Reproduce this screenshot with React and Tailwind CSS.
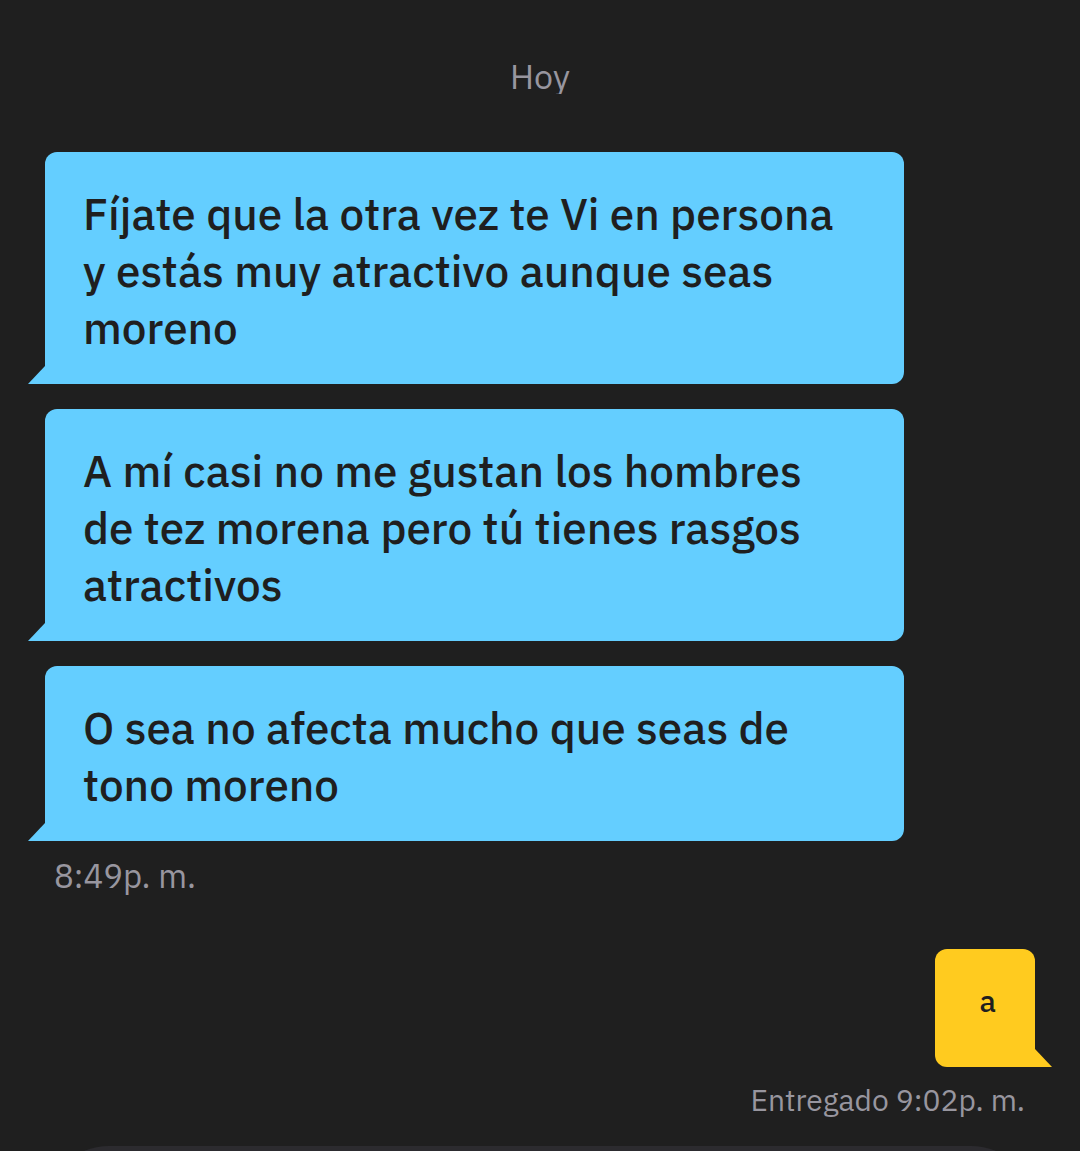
const received = [
  "Fíjate que la otra vez te Vi en persona y estás muy atractivo aunque seas moreno",
  "A mí casi no me gustan los hombres de tez morena pero tú tienes rasgos atractivos",
  "O sea no afecta mucho que seas de tono moreno",
];

function Received({ text }) {
  return (
    <li className="relative rounded-xl rounded-bl-none bg-[#64ceff] pt-[33px] pr-16 pb-7 pl-[38px] text-[44px] leading-[57px] font-medium text-[#1f1f1f]">
      <p>{text}</p>
      <svg className="absolute bottom-0 -left-[17px] h-[18px] w-[18px]" viewBox="0 0 18 18" aria-hidden="true">
        <path d="M17 0H18V18H0Z" fill="#64ceff" />
      </svg>
    </li>
  );
}

export default function App() {
  return (
    <main className="flex h-screen flex-col overflow-hidden bg-[#1f1f1f] font-['IBM_Plex_Sans','Noto_Sans',sans-serif] text-[#98969f]">
      <h1 className="mt-[54px] h-10 shrink-0 overflow-hidden text-center text-[34px] leading-[44px] font-normal">Hoy</h1>
      <ul className="mt-[58px] mr-44 ml-[45px] flex shrink-0 flex-col gap-[25px]">
        {received.map((text) => (
          <Received key={text} text={text} />
        ))}
      </ul>
      <time className="mt-[13px] ml-[54px] block shrink-0 text-[33px] leading-[44px]">8:49p. m.</time>
      <div className="mt-[51px] mr-[45px] flex shrink-0 justify-end">
        <div className="relative rounded-xl rounded-br-none bg-[#ffcb1f] pt-8 pr-[39px] pb-[47px] pl-[45px] text-[30px] leading-[39px] font-medium text-[#1f1f1f]">
          <p>a</p>
          <svg className="absolute -right-[17px] bottom-0 h-[18px] w-[18px]" viewBox="0 0 18 18" aria-hidden="true">
            <path d="M0 0H1L18 18H0Z" fill="#ffcb1f" />
          </svg>
        </div>
      </div>
      <p className="mt-[13px] mr-[55px] shrink-0 text-right text-[30px] leading-[40px]">Entregado 9:02p. m.</p>
      <input
        type="text"
        aria-label="Mensaje"
        className="mx-[45px] mt-[26px] h-32 shrink-0 rounded-full bg-[#2c2b2f] px-12 text-[34px] outline-none"
      />
    </main>
  );
}
